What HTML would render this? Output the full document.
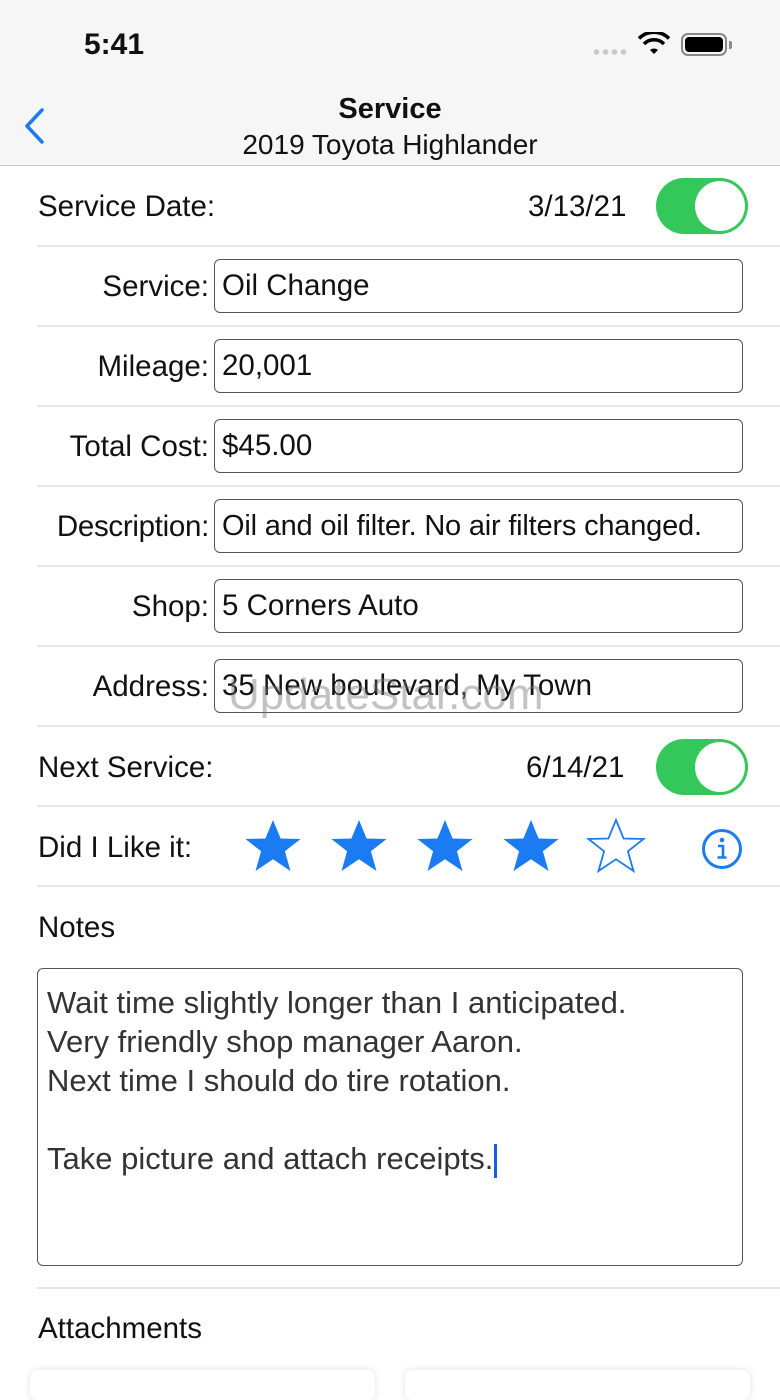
<!DOCTYPE html>
<html><head><meta charset="utf-8"><style>
*{margin:0;padding:0;box-sizing:border-box}
body{width:780px;height:1387px;overflow:hidden;background:#fff;font-family:"Liberation Sans",sans-serif;color:#111;position:relative}
.hdr{position:absolute;left:0;top:0;width:780px;height:166px;background:#f6f6f6;border-bottom:1px solid #c8c8c8}
.abs{position:absolute}
.sep{position:absolute;left:37px;right:0;height:2px;background:#e6e6e6}
.lbl{position:absolute;font-size:29.5px;white-space:nowrap;line-height:32px}
.r{text-align:right;width:172px;left:37px}
.fld{position:absolute;left:214px;width:529px;height:54px;border:1.5px solid #555;border-radius:6px;font-size:29.5px;padding-left:7px;line-height:52px;white-space:nowrap;overflow:hidden}
.tog{position:absolute;left:656px;width:92px;height:56px;border-radius:28px;background:#34c759}
.tog::after{content:"";position:absolute;right:3px;top:3px;width:50px;height:50px;border-radius:50%;background:#fff}
.notes{position:absolute;left:37px;top:968px;width:706px;height:298px;border:1.5px solid #555;border-radius:6px;font-size:31px;color:#333;padding:14px 0 0 9px;line-height:39px;font-weight:300;white-space:nowrap}
.card{position:absolute;top:1370px;height:30px;background:#fff;border-radius:8px;box-shadow:0 0 8px rgba(0,0,0,.12)}
</style></head><body>
<div class="hdr"></div>
<div class="abs" style="left:84px;top:28px;font-size:30px;font-weight:bold">5:41</div>
<div class="abs" style="left:592px;top:49px;width:36px;height:6px;background:radial-gradient(circle,#c8c8c8 2.5px,transparent 3px) 0 0/9px 6px"></div>
<svg class="abs" style="left:638px;top:32px" width="32" height="24" viewBox="0 0 32 24"><path d="M16 22l-4-4a6 6 0 0 1 8 0z" fill="#000"/><path d="M6 12a14 14 0 0 1 20 0M1 6.5a21 21 0 0 1 30 0" stroke="#000" stroke-width="3.5" fill="none"/></svg>
<div class="abs" style="left:681px;top:33px;width:46px;height:23px;border:2px solid #888;border-radius:7px;padding:2px"><div style="width:100%;height:100%;background:#000;border-radius:4px"></div></div>
<div class="abs" style="left:729px;top:41px;width:3px;height:8px;background:#888;border-radius:0 2px 2px 0"></div>
<svg class="abs" style="left:22px;top:108px" width="24" height="36" viewBox="0 0 24 36"><path d="M20 2L5 18l15 16" stroke="#1a7bf2" stroke-width="3.5" fill="none" stroke-linecap="round" stroke-linejoin="round"/></svg>
<div class="abs" style="left:0;width:780px;top:93px;text-align:center;font-size:29px;font-weight:bold">Service</div>
<div class="abs" style="left:0;width:780px;top:129px;text-align:center;font-size:28px">2019 Toyota Highlander</div>

<div class="lbl" style="left:38px;top:191px">Service Date:</div>
<div class="lbl" style="left:528px;top:191px">3/13/21</div>
<div class="tog" style="top:178px"></div>
<div class="sep" style="top:245px"></div>

<div class="lbl r" style="top:271px">Service:</div><div class="fld" style="top:259px">Oil Change</div>
<div class="sep" style="top:325px"></div>
<div class="lbl r" style="top:351px">Mileage:</div><div class="fld" style="top:339px">20,001</div>
<div class="sep" style="top:405px"></div>
<div class="lbl r" style="top:431px">Total Cost:</div><div class="fld" style="top:419px">$45.00</div>
<div class="sep" style="top:485px"></div>
<div class="lbl r" style="top:511px;letter-spacing:-0.3px">Description:</div><div class="fld" style="top:499px;font-size:29px;letter-spacing:-0.2px">Oil and oil filter. No air filters changed.</div>
<div class="sep" style="top:565px"></div>
<div class="lbl r" style="top:591px">Shop:</div><div class="fld" style="top:579px">5 Corners Auto</div>
<div class="sep" style="top:645px"></div>
<div class="lbl r" style="top:671px">Address:</div><div class="fld" style="top:659px">35 New boulevard, My Town</div>
<div class="abs" style="left:228px;top:670px;font-size:44px;color:rgba(120,120,120,.45)">UpdateStar.com</div>
<div class="sep" style="top:725px"></div>

<div class="lbl" style="left:38px;top:752px">Next Service:</div>
<div class="lbl" style="left:526px;top:752px">6/14/21</div>
<div class="tog" style="top:739px"></div>
<div class="sep" style="top:805px"></div>

<div class="lbl" style="left:38px;top:832px">Did I Like it:</div>
<svg class="abs" style="left:240px;top:818px" width="420" height="56" viewBox="0 0 420 56">
<defs><path id="s" d="M28 2l7.6 18.5 20 .5-15.7 12.3 5.6 19.7L28 41.3 10.5 53l5.6-19.7L.4 21l20-.5z"/></defs>
<use href="#s" x="5" fill="#1a7bf2"/><use href="#s" x="91" fill="#1a7bf2"/><use href="#s" x="177" fill="#1a7bf2"/><use href="#s" x="263" fill="#1a7bf2"/><use href="#s" x="348" fill="none" stroke="#1a7bf2" stroke-width="1.8"/>
</svg>
<svg class="abs" style="left:701px;top:828px" width="42" height="42" viewBox="0 0 42 42"><circle cx="21" cy="21" r="18.5" fill="none" stroke="#1a7bf2" stroke-width="3"/><circle cx="21" cy="12" r="2.3" fill="#1a7bf2"/><path d="M17 18h5v11M16.5 29.5h9" stroke="#1a7bf2" stroke-width="2.6" fill="none"/></svg>
<div class="sep" style="top:885px"></div>

<div class="lbl" style="left:38px;top:912px">Notes</div>
<div class="notes">Wait time slightly longer than I anticipated.<br>Very friendly shop manager Aaron.<br>Next time I should do tire rotation.<br><br>Take picture and attach receipts.<span style="display:inline-block;width:3px;height:34px;background:#1a5ce0;vertical-align:middle;margin-left:1px"></span></div>
<div class="sep" style="top:1287px"></div>
<div class="lbl" style="left:38px;top:1313px">Attachments</div>
<div class="card" style="left:30px;width:345px"></div>
<div class="card" style="left:405px;width:345px"></div>
</body></html>
